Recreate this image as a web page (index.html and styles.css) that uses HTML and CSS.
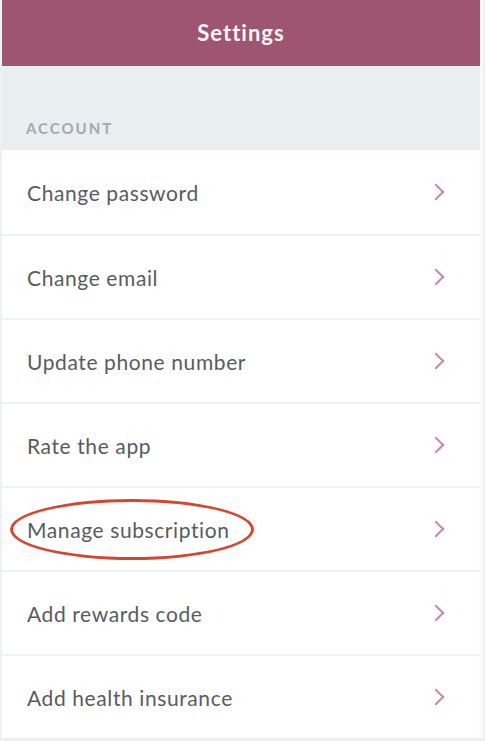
FILE: index.html
```html
<!DOCTYPE html>
<html lang="en">
<head>
    <meta charset="utf-8" />
    <title>Settings</title>
    <link rel="stylesheet" href="styles.css">
</head>
<body>
    <div class="screen">
        <header class="topbar">Settings</header>
        <div class="section-head">ACCOUNT</div>
        <ul class="menu">
            <li>Change password <span class="chev"></span></li>
            <li>Change email <span class="chev"></span></li>
            <li>Update phone number <span class="chev"></span></li>
            <li>Rate the app <span class="chev"></span></li>
            <li class="marked">Manage subscription <span class="chev"></span><span class="ring"></span></li>
            <li>Add rewards code <span class="chev"></span></li>
            <li>Add health insurance <span class="chev"></span></li>
        </ul>
    </div>
</body>
</html>
```

FILE: styles.css
```css
html, body{
    margin: 0;
    padding: 0;
}
body{
    background: #eef1f3;
    font-family: Lato, "Open Sans", sans-serif;
    height: 741px;
    overflow: hidden;
}
.screen{
    margin-left: 2px;
    width: 478px;
    background: #fff;
    border-right: 3px solid #fbf8f9;
}
.topbar{
    height: 66px;
    background: #9e5670;
    color: #fbf4f6;
    font-size: 22px;
    font-weight: 700;
    display: flex;
    align-items: center;
    justify-content: center;
    letter-spacing: 1px;
    padding-bottom: 2px;
    box-sizing: border-box;
}
.section-head{
    height: 84px;
    background: #e9eef1;
    color: #a2a9ae;
    font-size: 15px;
    font-weight: 700;
    letter-spacing: 2px;
    padding: 53px 0 0 24px;
    box-sizing: border-box;
}
.menu{
    list-style: none;
    margin: 0;
    padding: 0;
}
.menu li{
    position: relative;
    height: 84px;
    box-sizing: border-box;
    border-top: 2px solid #eef2f4;
    display: flex;
    align-items: center;
    justify-content: space-between;
    padding: 0 38px 0 25px;
    font-size: 21px;
    letter-spacing: 0.6px;
    color: #575c60;
}
.menu li:first-child{
    border-top: 0;
}
.chev{
    width: 10px;
    height: 10px;
    border-top: 2px solid #c98aa0;
    border-right: 2px solid #c98aa0;
    transform: rotate(45deg);
}
.ring{
    position: absolute;
    left: 8px;
    top: 11px;
    width: 238px;
    height: 55px;
    border: 3px solid #d9442f;
    border-radius: 50%;
}
```
